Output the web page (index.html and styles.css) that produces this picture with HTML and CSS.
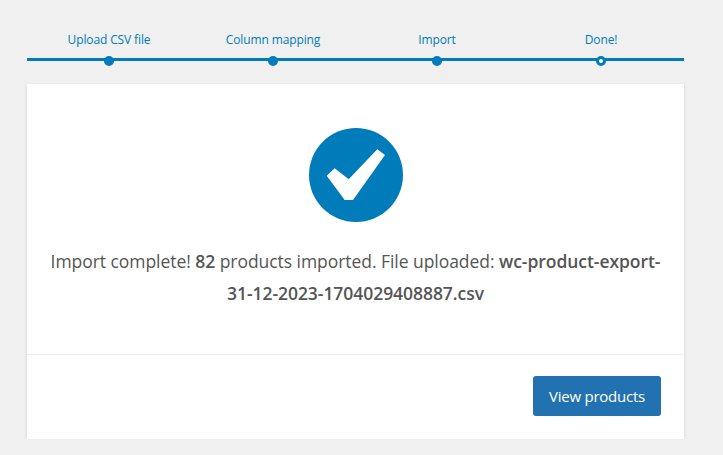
FILE: index.html
```html
<!DOCTYPE html>
<html lang="en">
<head>
  <meta charset="UTF-8">
  <meta name="viewport" content="width=device-width, initial-scale=1.0">
  <title>Import Products</title>
  <link rel="stylesheet" href="styles.css">
</head>
<body>
  <div class="importer">
    <ol class="progress-steps">
      <li>Upload CSV file</li>
      <li>Column mapping</li>
      <li>Import</li>
      <li class="active">Done!</li>
    </ol>

    <div class="importer-content">
      <section class="importer-done">
        <svg class="check-icon" viewBox="0 0 94 94" aria-hidden="true">
          <circle cx="47" cy="47" r="47" fill="#007cba"/>
          <path d="M17.7 47.7 25.7 40.3 39.7 51.3 68.3 21.3 76 27 44 72H35.7Z" fill="#fff"/>
        </svg>
        <p>Import complete! <strong>82</strong> products imported. File uploaded: <strong>wc-product-export-<br>31-12-2023-1704029408887.csv</strong></p>
      </section>
      <div class="actions">
        <a class="button" href="#">View products</a>
      </div>
    </div>
  </div>
</body>
</html>
```

FILE: styles.css
```css
*,
*::before {
  box-sizing: border-box;
}

body {
  margin: 0;
  background: #f0f0f0;
  color: #555;
  font-family: "Open Sans", "Noto Sans", sans-serif;
}

.importer {
  width: 657px;
  margin-left: 27px;
  padding-top: 30px;
}

.progress-steps {
  display: flex;
  margin: 0 0 23px;
  padding: 0;
  border-bottom: 3px solid #007cba;
  list-style: none;
  color: #007cba;
}

.progress-steps li {
  position: relative;
  width: 164px;
  height: 28px;
  font-size: 12px;
  line-height: 20px;
  letter-spacing: -0.12px;
  text-align: center;
}

/* step marker sitting on the line */
.progress-steps li::before {
  content: "";
  position: absolute;
  bottom: -8px;
  left: 50%;
  width: 10px;
  height: 10px;
  margin-left: -5px;
  border: 3px solid #007cba;
  border-radius: 50%;
  background: #007cba;
}

.progress-steps .active::before {
  background: #fff;
}

.importer-content {
  background: #fff;
  box-shadow: 0 1px 3px rgba(0, 0, 0, 0.13);
}

.importer-done {
  height: 271px;
  padding: 44px 20px 0;
  border-bottom: 1px solid #eee;
  text-align: center;
}

.check-icon {
  display: block;
  width: 94px;
  height: 94px;
  margin: 0 auto;
}

.importer-done p {
  margin: 23px 0 0;
  font-size: 17.5px;
  line-height: 32px;
  letter-spacing: -0.05px;
  white-space: nowrap;
}

.importer-done strong {
  font-weight: 600;
}

.actions {
  display: flex;
  justify-content: flex-end;
  height: 84px;
  padding: 21px 23px 0 0;
}

.button {
  width: 128px;
  height: 40px;
  border-radius: 3px;
  background: #2271b1;
  color: #fff;
  font-size: 15px;
  line-height: 40px;
  letter-spacing: -0.25px;
  text-align: center;
  text-decoration: none;
}
```
